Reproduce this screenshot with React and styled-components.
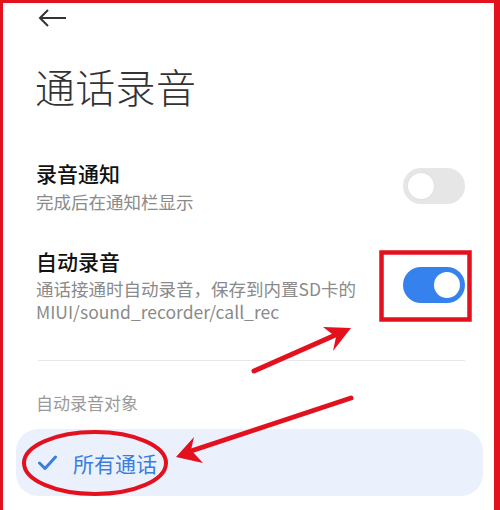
import styled, { createGlobalStyle } from "styled-components";

const GlobalStyle = createGlobalStyle`
  html, body {
    margin: 0;
    padding: 0;
    background: #fff;
  }
  body {
    font-family: "Noto Sans CJK SC", "Noto Sans", "Liberation Sans", sans-serif;
  }
`;

const Page = styled.div`
  position: relative;
  width: 500px;
  height: 510px;
  box-sizing: border-box;
  border-left: 3px solid #e3101e;
  border-top: 3px solid #e3101e;
  border-right: 6px solid #e3101e;
  background: #fff;
  overflow: hidden;
`;

const Section = styled.div`
  padding: 0 29px 0 33px;
`;

const Header = styled.div`
  display: flex;
  align-items: center;
  padding-top: 6px;
  height: 18px;
`;

const Title = styled.h1`
  margin: 35px 0 0 -1px;
  font-size: 40px;
  line-height: 48px;
  font-weight: 300;
  color: #333;
  letter-spacing: 0.3px;
`;

const Row = styled.div`
  display: flex;
  align-items: center;
  justify-content: space-between;
  margin-top: ${(p) => p.$gap}px;
`;

const RowText = styled.div`
  display: flex;
  flex-direction: column;
`;

const RowTitle = styled.div`
  font-size: 21px;
  line-height: 28px;
  font-weight: 500;
  color: #111;
`;

const RowSub = styled.div`
  margin-top: ${(p) => p.$gap || 0}px;
  font-size: 17.5px;
  line-height: 23px;
  color: #8a8a8a;
`;

const Toggle = styled.div`
  position: relative;
  flex: none;
  width: 62px;
  height: 36px;
  border-radius: 18px;
  background: ${(p) => (p.$on ? "#3581ee" : "#e6e6e6")};
`;

const Knob = styled.span`
  position: absolute;
  top: 5px;
  left: ${(p) => (p.$on ? "31px" : "5px")};
  width: 26px;
  height: 26px;
  border-radius: 50%;
  background: #fff;
  box-shadow: ${(p) => (p.$on ? "none" : "0 0 0 1px #e0e0e0")};
`;

const Divider = styled.hr`
  margin: 37px 0 0 2px;
  border: none;
  height: 1px;
  background: #e8e8e8;
`;

const GroupLabel = styled.div`
  margin-top: 31px;
  font-size: 17px;
  line-height: 22px;
  color: #9a9a9a;
`;

const OptionList = styled.div`
  padding: 15px 11px 0 13px;
`;

const Option = styled.div`
  display: flex;
  align-items: center;
  gap: 16px;
  height: 67px;
  padding-left: 22px;
  border-radius: 22px;
  background: ${(p) => (p.$selected ? "#eaf1fd" : "transparent")};
  color: #3b7ddd;
  font-size: 21px;
  line-height: 28px;
`;

const Overlay = styled.svg`
  position: absolute;
  left: -3px;
  top: -3px;
  width: 500px;
  height: 510px;
  pointer-events: none;
`;

const red = "#e3101e";

function Switch({ on }) {
  return (
    <Toggle $on={on}>
      <Knob $on={on} />
    </Toggle>
  );
}

export default function App() {
  return (
    <>
      <GlobalStyle />
      <Page>
        <Section>
          <Header>
            <svg width="30" height="18" viewBox="0 0 30 18" fill="none">
              <path d="M4 9H31M12 1L4 9L12 17" stroke="#333" strokeWidth="2" />
            </svg>
          </Header>
          <Title>通话录音</Title>

          <Row $gap={49}>
            <RowText>
              <RowTitle>录音通知</RowTitle>
              <RowSub $gap={3}>完成后在通知栏显示</RowSub>
            </RowText>
            <Switch on={false} />
          </Row>

          <Row $gap={34}>
            <RowText>
              <RowTitle>自动录音</RowTitle>
              <RowSub $gap={2}>
                通话接通时自动录音，保存到内置SD卡的
                <br />
                MIUI/sound_recorder/call_rec
              </RowSub>
            </RowText>
            <Switch on />
          </Row>

          <Divider />
          <GroupLabel>自动录音对象</GroupLabel>
        </Section>

        <OptionList>
          <Option $selected>
            <svg width="19" height="16" viewBox="0 0 19 16" fill="none">
              <path d="M1.5 8L7 13.5L17.5 2" stroke="#3b7ddd" strokeWidth="3" strokeLinecap="round" strokeLinejoin="round" />
            </svg>
            所有通话
          </Option>
        </OptionList>

        <Overlay viewBox="0 0 500 510">
          <rect x="381.5" y="252.5" width="88" height="67" fill="none" stroke={red} strokeWidth="4.5" />
          <line x1="254" y1="371" x2="340" y2="333" stroke={red} strokeWidth="5" strokeLinecap="round" />
          <polygon points="351,328 323,327 336,337 333,351" fill={red} />
          <line x1="351" y1="398" x2="188" y2="452" stroke={red} strokeWidth="5" strokeLinecap="round" />
          <polygon points="176,457 194,437 191,450 203,463" fill={red} />
          <ellipse cx="95" cy="463" rx="71" ry="31" fill="none" stroke={red} strokeWidth="4" />
        </Overlay>
      </Page>
    </>
  );
}
